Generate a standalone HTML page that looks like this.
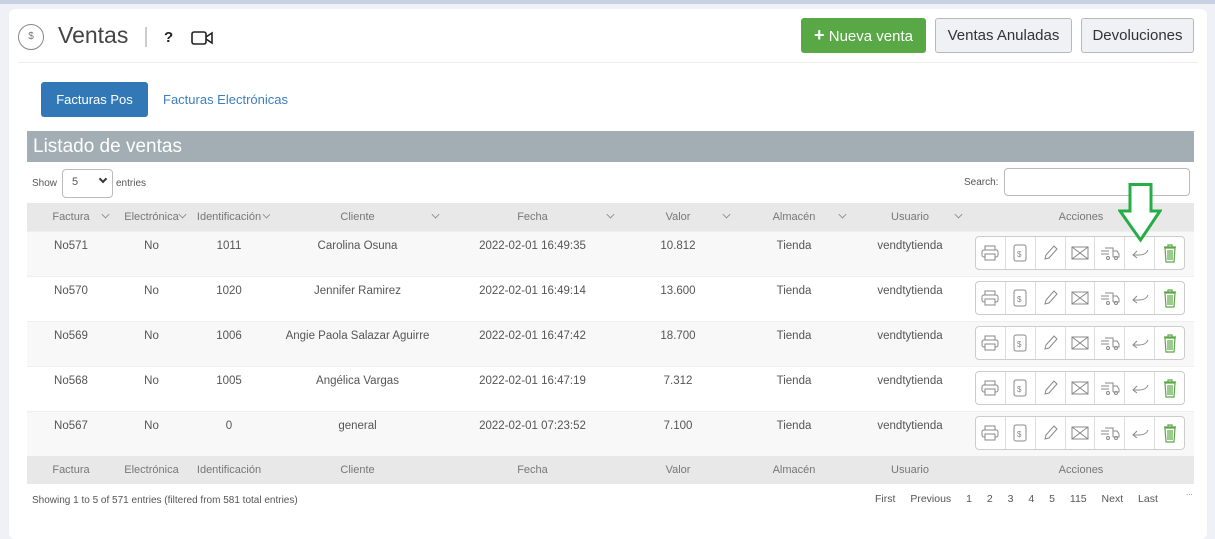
<!DOCTYPE html>
<html><head><meta charset="utf-8"><style>
*{box-sizing:border-box;margin:0;padding:0}
body{width:1215px;height:528px;overflow:hidden;background:#f0f1f6;font-family:"Liberation Sans",sans-serif;color:#555;position:relative}
.top{position:absolute;left:0;top:0;width:1215px;height:4px;background:#c6d2e4}
.card{position:absolute;left:9px;top:9px;width:1198px;height:530px;background:#fff;border-radius:6px}
.abs{position:absolute}
.btn{position:absolute;top:9px;height:35px;border:1px solid #b8b8bc;background:#f0f1f5;border-radius:3px;font-size:15px;color:#333;line-height:33px;text-align:center}
table{position:absolute;left:27px;border-collapse:collapse;table-layout:fixed;width:1167px;font-size:11px}
th{font-weight:normal;color:#777;background:#e8e8e8;height:28px;position:relative;text-align:center;padding:0}
th .c{position:absolute;right:6px;top:8px;width:7px;height:7px;border-right:1px solid #888;border-bottom:1px solid #888;transform:rotate(45deg) scale(.8)}
tr.r{height:45px}
td{text-align:center;color:#555;border-top:1px solid #eee;vertical-align:top;padding:8px 0 0;font-size:11.5px;line-height:13px}
tr.g td{background:#f8f8f8}
.w{height:0;position:relative}
.acts{position:absolute;left:7px;top:-4px;display:flex;width:210px;height:34px;border:1px solid #ccc;border-radius:4px;background:#fff}
.acts span{flex:1;border-right:1px solid #ddd;display:flex;align-items:center;justify-content:center}
.acts span:last-child{border-right:0}
</style></head><body>
<div class="top"></div>
<div class="card">
 <div class="abs" style="left:9px;top:15px;width:26px;height:26px;border:1px solid #888;border-radius:50%;font-size:10px;text-align:center;line-height:24px;color:#777">$</div>
 <div class="abs" style="left:49px;top:13px;font-size:23px;color:#444">Ventas</div>
 <div class="abs" style="left:136px;top:18px;width:2px;height:20px;background:#ccc"></div>
 <div class="abs" style="left:155px;top:20px;font-size:15px;font-weight:bold;color:#222">?</div>
 <svg class="abs" style="left:182px;top:21px" width="22" height="16"><rect x="1" y="2" width="14" height="12" rx="2" fill="none" stroke="#222" stroke-width="1.6"/><path d="M15 7 L21 3 V13 L15 9" fill="none" stroke="#222" stroke-width="1.6"/></svg>
 <div class="btn" style="left:792px;width:125px;background:#58a846;border-color:#58a846;color:#fff"><b style="font-size:18px">+</b> Nueva venta</div>
 <div class="btn" style="left:926px;width:137px">Ventas Anuladas</div>
 <div class="btn" style="left:1072px;width:113px">Devoluciones</div>
 <div class="abs" style="left:9px;top:53px;width:1180px;height:1px;background:#eee"></div>
 <div class="abs" style="left:32px;top:73px;width:107px;height:35px;background:#3278b7;border-radius:3px;color:#fff;font-size:13px;text-align:center;line-height:35px">Facturas Pos</div>
 <div class="abs" style="left:154px;top:83px;font-size:13px;color:#3d7fc0">Facturas Electrónicas</div>
</div>
<div class="abs" style="left:27px;top:131px;width:1167px;height:31px;background:#a2adb4;color:#fff;font-size:19px;padding:5px 0 0 6px">Listado de ventas</div>
<div class="abs" style="left:32px;top:178px;font-size:10px;color:#555">Show</div>
<div class="abs" style="left:62px;top:169px;width:51px;height:29px;border:1px solid #bbb;border-radius:4px;font-size:11px;padding:6px 0 0 9px">5<span style="position:absolute;right:6px;top:6px;width:6px;height:6px;border-right:2px solid #333;border-bottom:2px solid #333;transform:rotate(45deg)"></span></div>
<div class="abs" style="left:116px;top:178px;font-size:10px;color:#555">entries</div>
<div class="abs" style="left:964px;top:177px;font-size:10px;color:#555">Search:</div>
<div class="abs" style="left:1004px;top:168px;width:186px;height:28px;border:1px solid #bbb;border-radius:4px"></div>
<table style="top:203px">
<colgroup><col style="width:88px"><col style="width:73px"><col style="width:82px"><col style="width:175px"><col style="width:175px"><col style="width:116px"><col style="width:116px"><col style="width:116px"><col style="width:226px"></colgroup>
<tr><th>Factura<i class="c"></i></th><th>Electrónica<i class="c" style="right:2px"></i></th><th>Identificación<i class="c" style="right:0"></i></th><th>Cliente<i class="c"></i></th><th>Fecha<i class="c"></i></th><th>Valor<i class="c"></i></th><th>Almacén<i class="c"></i></th><th>Usuario<i class="c"></i></th><th>Acciones</th></tr>
<tr class="r g"><td>No571</td><td>No</td><td>1011</td><td>Carolina Osuna</td><td>2022-02-01 16:49:35</td><td>10.812</td><td>Tienda</td><td>vendtytienda</td><td><div class="w"><div class="acts A"></div></div></td></tr>
<tr class="r"><td>No570</td><td>No</td><td>1020</td><td>Jennifer Ramirez</td><td>2022-02-01 16:49:14</td><td>13.600</td><td>Tienda</td><td>vendtytienda</td><td><div class="w"><div class="acts A"></div></div></td></tr>
<tr class="r g"><td>No569</td><td>No</td><td>1006</td><td>Angie Paola Salazar Aguirre</td><td>2022-02-01 16:47:42</td><td>18.700</td><td>Tienda</td><td>vendtytienda</td><td><div class="w"><div class="acts A"></div></div></td></tr>
<tr class="r"><td>No568</td><td>No</td><td>1005</td><td>Angélica Vargas</td><td>2022-02-01 16:47:19</td><td>7.312</td><td>Tienda</td><td>vendtytienda</td><td><div class="w"><div class="acts A"></div></div></td></tr>
<tr class="r g"><td>No567</td><td>No</td><td>0</td><td>general</td><td>2022-02-01 07:23:52</td><td>7.100</td><td>Tienda</td><td>vendtytienda</td><td><div class="w"><div class="acts A"></div></div></td></tr>
<tr><th>Factura</th><th>Electrónica</th><th>Identificación</th><th>Cliente</th><th>Fecha</th><th>Valor</th><th>Almacén</th><th>Usuario</th><th>Acciones</th></tr>
</table>
<div class="abs" style="left:875px;top:493px;font-size:10.5px;color:#555;word-spacing:12px">First Previous 1 2 3 4 5 115 Next Last</div>
<div class="abs" style="left:32px;top:495px;font-size:10px;color:#555">Showing 1 to 5 of 571 entries (filtered from 581 total entries)</div>
<div class="abs" style="left:1186px;top:488px;font-size:8px;color:#777">...</div>
<svg class="abs" style="left:1118px;top:183px" width="44" height="60"><path d="M12 1.5 H33 V28 H42 L22.5 57 L2 28 H12 Z" fill="#fff" stroke="#27ad48" stroke-width="3"/></svg>
<template id="t"><span><svg width="18" height="16"><rect x="4" y="1" width="10" height="4" fill="none" stroke="#888"/><rect x="1" y="5" width="16" height="7" rx="2" fill="none" stroke="#888"/><rect x="4" y="9" width="10" height="6" fill="#fff" stroke="#888"/></svg></span><span><svg width="16" height="18"><rect x="2" y="1" width="12" height="16" rx="2" fill="none" stroke="#888"/><text x="5" y="13" font-size="8" fill="#888" font-family="Liberation Sans">$</text></svg></span><span><svg width="16" height="18"><path d="M3 15 L4 11 L12 2 L15 5 L7 14 Z" fill="none" stroke="#888"/></svg></span><span><svg width="18" height="14"><rect x="1" y="1" width="16" height="12" fill="none" stroke="#888"/><path d="M1 1 L17 13 M17 1 L1 13" stroke="#888"/></svg></span><span><svg width="20" height="14"><path d="M5 2 H13 V11 M13 5 H17 L19 8 V11 H13" fill="none" stroke="#888"/><path d="M1 5 H9 M1 8 H9" stroke="#888"/><circle cx="8" cy="12" r="1.5" fill="none" stroke="#888"/><circle cx="16" cy="12" r="1.5" fill="none" stroke="#888"/></svg></span><span><svg width="18" height="12"><path d="M17 3 Q15 8 8 8 H3 M6 4 L2 8 L6 11" fill="none" stroke="#888"/></svg></span><span><svg width="16" height="20"><path d="M2 4 H14 M6 4 V2 H10 V4 M3 5 L4 19 H12 L13 5 Z M6 7 V17 M8 7 V17 M10 7 V17" fill="none" stroke="#5aa845" stroke-width="1.2"/></svg></span></template>
<script>var h=document.getElementById('t').innerHTML;document.querySelectorAll('.A').forEach(function(e){e.innerHTML=h});</script>
</body></html>
